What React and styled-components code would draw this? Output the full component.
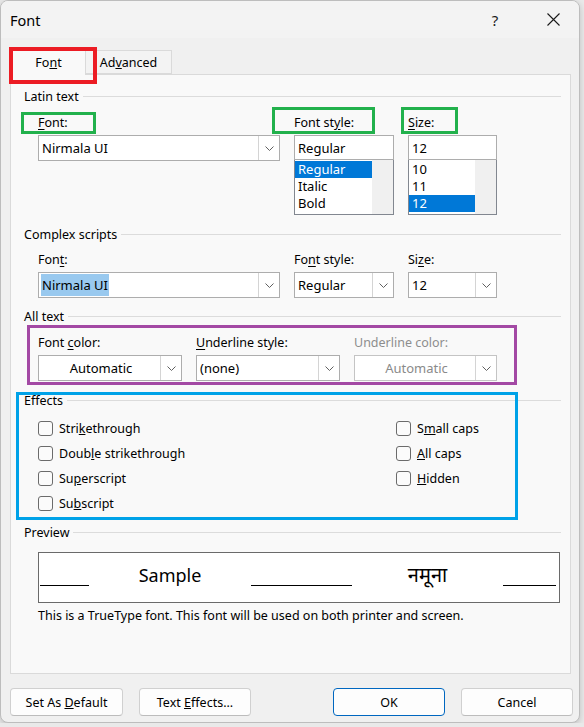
import React from 'react';
import styled, { createGlobalStyle } from 'styled-components';

const GlobalStyle = createGlobalStyle`
  html, body {
    margin: 0;
    padding: 0;
    background: #e9e9e9;
  }
  body {
    font-family: "Noto Sans", "Open Sans", sans-serif;
    color: #000;
  }
  * {
    box-sizing: border-box;
  }
`;

const Window = styled.div`
  position: relative;
  width: 580px;
  height: 723px;
  background: #f0f0f0;
  border: 1px solid #bdbdbd;
  border-radius: 8px;
  overflow: hidden;
  display: flex;
  flex-direction: column;
  box-shadow: 0 2px 6px rgba(0, 0, 0, 0.18);
`;

const TitleBar = styled.div`
  flex: none;
  height: 37px;
  display: flex;
  align-items: center;
  padding: 0 3px 0 9px;
  background: #f3f3f3;
`;

const Title = styled.div`
  flex: 1;
  font-size: 14.5px;
`;

const TitleButton = styled.div`
  width: 46px;
  height: 30px;
  display: flex;
  align-items: center;
  justify-content: center;
  font-size: 15px;
  color: #1a1a1a;
  margin-left: ${p => p.$gap || 0}px;
`;

const TabStrip = styled.div`
  flex: none;
  height: 37px;
  display: flex;
  align-items: flex-end;
  padding-left: 10px;
  position: relative;
  z-index: 1;
`;

const Tab = styled.div`
  height: ${p => (p.$active ? 26 : 24)}px;
  width: ${p => p.$w}px;
  margin-bottom: ${p => (p.$active ? 0 : 1)}px;
  display: flex;
  align-items: center;
  justify-content: center;
  font-size: 12.5px;
  background: ${p => (p.$active ? '#f9f9f9' : '#f3f3f3')};
  border: 1px solid #dadada;
  border-bottom: ${p => (p.$active ? 'none' : '1px solid #dadada')};
  border-left: ${p => (p.$active ? '1px solid #dadada' : 'none')};
`;

const Panel = styled.div`
  flex: none;
  height: 600px;
  margin: -1px 8px 0 9px;
  background: #f9f9f9;
  border: 1px solid #dadada;
  padding: 14px 9px 0 13px;
`;

const SectionHead = styled.div`
  display: flex;
  align-items: center;
  gap: 4px;
  font-size: 12.5px;
  line-height: 16px;
  margin-top: ${p => p.$mt || 0}px;
  &::after {
    content: '';
    flex: 1;
    height: 1px;
    margin-top: -1px;
    background: #dcdcdc;
  }
`;

const FieldRow = styled.div`
  display: grid;
  grid-template-columns: ${p => p.$cols};
  column-gap: 14px;
  padding-left: 14px;
  margin-top: ${p => p.$mt || 0}px;
`;

const Field = styled.div`
  display: flex;
  flex-direction: column;
`;

const Label = styled.div`
  font-size: 12.5px;
  line-height: 16px;
  margin-bottom: 4px;
  color: ${p => (p.$disabled ? '#8d8d8d' : '#000')};
  u {
    text-underline-offset: 2px;
  }
`;

const Combo = styled.div`
  display: flex;
  height: 26px;
  background: #fff;
  border: 1px solid ${p => (p.$disabled ? '#c4c4c4' : '#adadad')};
`;

const ComboText = styled.div`
  flex: 1;
  display: flex;
  align-items: center;
  justify-content: ${p => (p.$center ? 'center' : 'flex-start')};
  padding-left: 3px;
  font-size: 13px;
  color: ${p => (p.$disabled ? '#8a8a8a' : '#000')};
`;

const Selected = styled.span`
  background: #99c9ef;
  padding: 2px 1px;
  margin-left: -1px;
`;

const DropButton = styled.div`
  width: 21px;
  display: flex;
  align-items: center;
  justify-content: center;
  border-left: 1px solid #d4d4d4;
`;

const TextInput = styled.div`
  height: 25px;
  display: flex;
  align-items: center;
  padding-left: 3px;
  background: #fff;
  border: 1px solid #adadad;
  font-size: 13px;
`;

const ListBox = styled.div`
  height: 55px;
  display: flex;
  background: #fff;
  border: 1px solid #828790;
  border-top: none;
`;

const ListItems = styled.div`
  flex: 1;
  padding: 1px 0 0 0;
`;

const ListItem = styled.div`
  height: 17px;
  line-height: 17px;
  padding-left: 3px;
  font-size: 13px;
  background: ${p => (p.$selected ? '#0078d7' : 'transparent')};
  color: ${p => (p.$selected ? '#fff' : '#000')};
`;

const ScrollTrack = styled.div`
  width: 21px;
  background: #f0f0f0;
`;

const Effects = styled.div`
  display: grid;
  grid-template-columns: 358px auto;
  grid-auto-flow: column;
  grid-template-rows: repeat(4, 25px);
  padding-left: 14px;
  margin-top: 7px;
`;

const CheckRow = styled.label`
  display: flex;
  align-items: center;
  gap: 6px;
  font-size: 12.5px;
`;

const Box = styled.span`
  width: 15px;
  height: 15px;
  border: 1px solid #6b6b6b;
  border-radius: 3px;
  background: #fbfbfb;
`;

const Preview = styled.div`
  height: 51px;
  margin: 11px 1px 0 14px;
  background: #fff;
  border: 1px solid #6a6a6a;
  display: grid;
  grid-template-columns: 49px 162px 101px 1fr 53px;
  align-items: end;
  padding: 0 3px 16px 1px;
`;

const Rule = styled.div`
  height: 1px;
  background: #000;
`;

const SampleText = styled.div`
  text-align: center;
  font-size: ${p => p.$size || 18}px;
  line-height: 18px;
  margin-bottom: 2px;
  font-family: "Noto Sans", "Noto Sans Devanagari", sans-serif;
`;

const Note = styled.div`
  font-size: 12.5px;
  line-height: 16px;
  padding-left: 14px;
  margin-top: 5px;
`;

const Footer = styled.div`
  flex: none;
  display: flex;
  gap: 16px;
  padding: 0 6px 0 9px;
  margin-top: 14px;
`;

const Button = styled.div`
  width: ${p => p.$w || 112}px;
  height: 28px;
  display: flex;
  align-items: center;
  justify-content: center;
  font-size: 12.5px;
  background: #fdfdfd;
  border: 1px solid ${p => (p.$primary ? '#0067c0' : '#d0d0d0')};
  border-bottom-color: ${p => (p.$primary ? '#0067c0' : '#bcbcbc')};
  border-radius: 4px;
  margin-left: ${p => (p.$push ? 'auto' : '0')};
`;

// annotation frames drawn over the dialog
const Mark = styled.div`
  position: absolute;
  left: ${p => p.$x}px;
  top: ${p => p.$y}px;
  width: ${p => p.$w}px;
  height: ${p => p.$h}px;
  border: ${p => p.$t || 3}px solid ${p => p.$c};
  pointer-events: none;
  z-index: 5;
`;

const Chevron = () => (
  <svg width="9" height="5" viewBox="0 0 9 5">
    <path d="M0.5 0.5 L4.5 4.5 L8.5 0.5" fill="none" stroke="#606060" strokeWidth="1" />
  </svg>
);

const CloseIcon = () => (
  <svg width="13" height="13" viewBox="0 0 13 13">
    <path d="M0.5 0.5 L12.5 12.5 M12.5 0.5 L0.5 12.5" stroke="#1a1a1a" strokeWidth="1.1" />
  </svg>
);

const DropDown = ({ children, center, disabled }) => (
  <Combo $disabled={disabled}>
    <ComboText $center={center} $disabled={disabled}>{children}</ComboText>
    <DropButton>
      <Chevron />
    </DropButton>
  </Combo>
);

const Check = ({ children }) => (
  <CheckRow>
    <Box />
    <span>{children}</span>
  </CheckRow>
);

export default function App() {
  return (
    <>
      <GlobalStyle />
      <Window>
        <TitleBar>
          <Title>Font</Title>
          <TitleButton>?</TitleButton>
          <TitleButton $gap={12}>
            <CloseIcon />
          </TitleButton>
        </TitleBar>

        <TabStrip>
          <Tab $active $w={75}>
            <span>Fo<u>n</u>t</span>
          </Tab>
          <Tab $w={86}>
            <span>Ad<u>v</u>anced</span>
          </Tab>
        </TabStrip>

        <Panel>
          <SectionHead>Latin text</SectionHead>
          <FieldRow $cols="242px 100px 89px" $mt={10}>
            <Field>
              <Label><u>F</u>ont:</Label>
              <DropDown>Nirmala UI</DropDown>
            </Field>
            <Field>
              <Label>Font st<u>y</u>le:</Label>
              <TextInput>Regular</TextInput>
              <ListBox>
                <ListItems>
                  <ListItem $selected style={{ width: 77 }}>Regular</ListItem>
                  <ListItem>Italic</ListItem>
                  <ListItem>Bold</ListItem>
                </ListItems>
                <ScrollTrack />
              </ListBox>
            </Field>
            <Field>
              <Label><u>S</u>ize:</Label>
              <TextInput>12</TextInput>
              <ListBox>
                <ListItems>
                  <ListItem>10</ListItem>
                  <ListItem>11</ListItem>
                  <ListItem $selected>12</ListItem>
                </ListItems>
                <ScrollTrack />
              </ListBox>
            </Field>
          </FieldRow>

          <SectionHead $mt={12}>Complex scripts</SectionHead>
          <FieldRow $cols="242px 100px 89px" $mt={9}>
            <Field>
              <Label>Fon<u>t</u>:</Label>
              <DropDown><Selected>Nirmala UI</Selected></DropDown>
            </Field>
            <Field>
              <Label>Fo<u>n</u>t style:</Label>
              <DropDown>Regular</DropDown>
            </Field>
            <Field>
              <Label>Si<u>z</u>e:</Label>
              <DropDown>12</DropDown>
            </Field>
          </FieldRow>

          <SectionHead $mt={11}>All text</SectionHead>
          <FieldRow $cols="144px 144px 143px" $mt={10}>
            <Field>
              <Label>Font <u>c</u>olor:</Label>
              <DropDown center>Automatic</DropDown>
            </Field>
            <Field>
              <Label><u>U</u>nderline style:</Label>
              <DropDown>(none)</DropDown>
            </Field>
            <Field>
              <Label $disabled>Underline color:</Label>
              <DropDown center disabled>Automatic</DropDown>
            </Field>
          </FieldRow>

          <SectionHead $mt={12}>Effects</SectionHead>
          <Effects>
            <Check>Stri<u>k</u>ethrough</Check>
            <Check>Doub<u>l</u>e strikethrough</Check>
            <Check>Su<u>p</u>erscript</Check>
            <Check>Su<u>b</u>script</Check>
            <Check>S<u>m</u>all caps</Check>
            <Check><u>A</u>ll caps</Check>
            <Check><u>H</u>idden</Check>
          </Effects>

          <SectionHead $mt={9}>Preview</SectionHead>
          <Preview>
            <Rule />
            <SampleText>Sample</SampleText>
            <Rule />
            <SampleText $size={20}>नमूना</SampleText>
            <Rule />
          </Preview>
          <Note>This is a TrueType font. This font will be used on both printer and screen.</Note>
        </Panel>

        <Footer>
          <Button $w={113}><span>Set As <u>D</u>efault</span></Button>
          <Button><span>Text <u>E</u>ffects...</span></Button>
          <Button $primary $push>OK</Button>
          <Button>Cancel</Button>
        </Footer>

        <Mark $c="#ec1c24" $t={4} $x={8} $y={46} $w={88} $h={37} />
        <Mark $c="#22b14c" $x={20} $y={111} $w={75} $h={22} />
        <Mark $c="#22b14c" $x={271} $y={106} $w={103} $h={27} />
        <Mark $c="#22b14c" $x={400} $y={106} $w={57} $h={27} />
        <Mark $c="#a349a4" $x={26} $y={324} $w={490} $h={60} />
        <Mark $c="#00a2e8" $x={15} $y={391} $w={502} $h={128} />
      </Window>
    </>
  );
}
